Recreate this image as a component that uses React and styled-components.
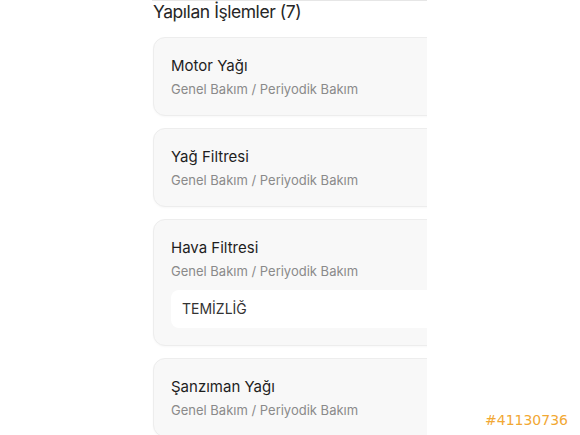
import React from "react";
import styled, { createGlobalStyle } from "styled-components";

const Global = createGlobalStyle`
  html, body { margin: 0; padding: 0; background: #ffffff; }
  body { font-family: Inter, "Noto Sans", "Liberation Sans", sans-serif; }
  * { box-sizing: border-box; }
`;

const Page = styled.div`
  display: flex;
  width: 580px;
  height: 435px;
  overflow: hidden;
`;

const Gutter = styled.div`
  width: 152px;
  flex: none;
`;

const Panel = styled.div`
  width: 275px;
  flex: none;
  height: 435px;
  overflow: hidden;
  border-top: 1px solid #e6e6e6;
  background: #ffffff;
`;

const Inner = styled.div`
  width: 320px;
  padding-left: 1px;
`;

const Heading = styled.h2`
  margin: 0 0 14px 0;
  font-size: 17.5px;
  line-height: 22px;
  font-weight: 400;
  letter-spacing: -0.45px;
  color: #262626;
`;

const List = styled.div`
  display: flex;
  flex-direction: column;
  gap: 12.5px;
`;

const Card = styled.div`
  background: #f8f8f8;
  border: 1px solid #ededed;
  border-radius: 12px;
  padding: 17.5px 17px 17px 17px;
  box-shadow: 0 1px 2px rgba(0, 0, 0, 0.03);
`;

const Title = styled.div`
  font-size: 15px;
  line-height: 20px;
  font-weight: 400;
  color: #1e1e1e;
`;

const Sub = styled.div`
  margin-top: 4px;
  font-size: 13px;
  line-height: 18px;
  color: #8a8a8a;
`;

const Note = styled.div`
  margin-top: 10px;
  height: 38px;
  display: flex;
  align-items: center;
  padding-left: 11px;
  background: #ffffff;
  border-radius: 8px;
  font-size: 14px;
  letter-spacing: 0;
  color: #333333;
`;

const Side = styled.div`
  flex: 1;
  display: flex;
  justify-content: flex-end;
  align-items: flex-end;
  padding: 0 12px 6px 0;
`;

const Tag = styled.span`
  font-family: "DejaVu Sans", sans-serif;
  font-size: 14px;
  line-height: 17px;
  color: #f2a833;
`;

const items = [
  { title: "Motor Yağı" },
  { title: "Yağ Filtresi" },
  { title: "Hava Filtresi", note: "TEMİZLİĞ" },
  { title: "Şanzıman Yağı" },
];

export default function App() {
  return (
    <>
      <Global />
      <Page>
        <Gutter />
        <Panel>
          <Inner>
            <Heading>Yapılan İşlemler (7)</Heading>
            <List>
              {items.map((it) => (
                <Card key={it.title}>
                  <Title>{it.title}</Title>
                  <Sub>Genel Bakım / Periyodik Bakım</Sub>
                  {it.note && <Note>{it.note}</Note>}
                </Card>
              ))}
            </List>
          </Inner>
        </Panel>
        <Side>
          <Tag>#41130736</Tag>
        </Side>
      </Page>
    </>
  );
}
